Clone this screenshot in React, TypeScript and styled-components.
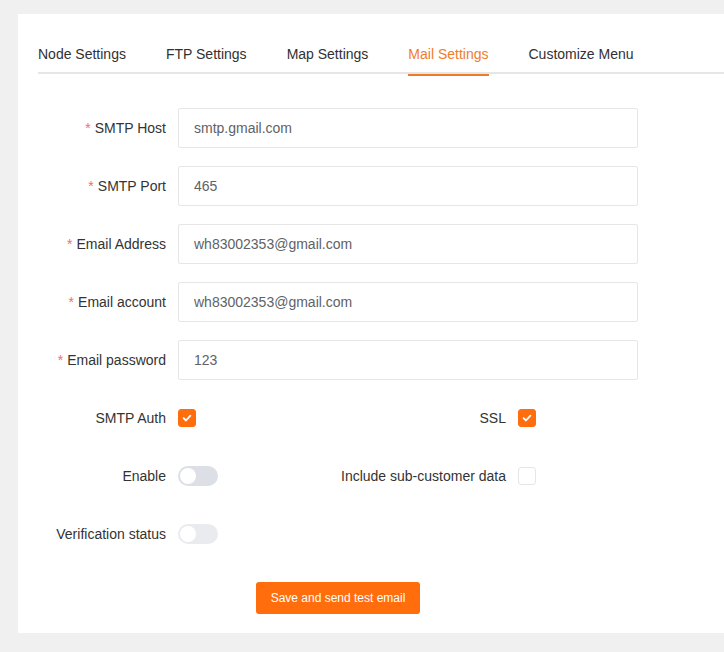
import React from "react";
import styled, { createGlobalStyle } from "styled-components";

const Global = createGlobalStyle`
  html, body { margin: 0; padding: 0; background: #f0f0f0; }
  body { font-family: "Liberation Sans", Arial, sans-serif; }
  * { box-sizing: border-box; }
`;

const Page = styled.div`
  padding: 14px 0 19px 18px;
  width: 724px;
`;

const Card = styled.div`
  background: #fff;
  padding: 19px 0 15px 20px;
`;

const TabBar = styled.div`
  display: flex;
  height: 41px;
  border-bottom: 2px solid #e6e6e6;
  margin-bottom: 34px;
`;

const Tab = styled.div<{ $active?: boolean }>`
  position: relative;
  height: 41px;
  line-height: 43px;
  padding: 0 20px;
  font-size: 14px;
  color: ${(p) => (p.$active ? "#f07c2b" : "#303133")};
  &:first-child { padding-left: 0; }
  ${(p) =>
    p.$active &&
    `&::after {
      content: "";
      position: absolute;
      left: 20px;
      right: 20px;
      bottom: -2px;
      height: 2px;
      background: #f07a26;
    }`}
`;

const Form = styled.div`
  width: 600px;
`;

const Row = styled.div`
  display: grid;
  grid-template-columns: 300px 300px;
  margin-bottom: 18px;
`;

const Item = styled.div`
  display: flex;
  align-items: center;
  height: 40px;
  margin-bottom: 18px;
`;

const HalfItem = styled.div`
  display: flex;
  align-items: center;
  height: 40px;
`;

const Label = styled.label<{ $w?: number }>`
  width: ${(p) => p.$w ?? 140}px;
  flex-shrink: 0;
  padding-right: 12px;
  text-align: right;
  font-size: 14px;
  color: #333;
`;

const Star = styled.span`
  color: #f56c6c;
  margin-right: 4px;
`;

const Input = styled.input`
  width: 460px;
  height: 40px;
  border: 1px solid #e6e6e6;
  border-radius: 2px;
  padding: 0 15px;
  font-family: "Liberation Sans", Arial, sans-serif;
  font-size: 14px;
  color: #606266;
  outline: none;
`;

const Box = styled.span<{ $checked?: boolean }>`
  width: 18px;
  height: 18px;
  border-radius: 3px;
  display: inline-flex;
  align-items: center;
  justify-content: center;
  background: ${(p) => (p.$checked ? "#ff6d0d" : "#fff")};
  border: 1px solid ${(p) => (p.$checked ? "#ff6d0d" : "#e4e6eb")};
`;

const Switch = styled.span<{ $dim?: boolean }>`
  position: relative;
  width: 40px;
  height: 20px;
  border-radius: 10px;
  background: #dcdfe6;
  opacity: ${(p) => (p.$dim ? 0.6 : 1)};
  &::after {
    content: "";
    position: absolute;
    left: 2px;
    top: 2px;
    width: 16px;
    height: 16px;
    border-radius: 50%;
    background: #fff;
  }
`;

const ButtonRow = styled.div`
  display: flex;
  justify-content: center;
  align-items: center;
  height: 40px;
  margin-top: 24px;
`;

const Button = styled.button`
  height: 32px;
  padding: 0 15px;
  border: none;
  border-radius: 3px;
  background: #ff6d0d;
  color: #fff;
  font-family: "Liberation Sans", Arial, sans-serif;
  font-size: 12px;
`;

const Check = () => (
  <svg width="12" height="12" viewBox="0 0 12 12">
    <path d="M2.6 6.2 L5 8.5 L9.4 3.6" fill="none" stroke="#fff" strokeWidth="1.8" strokeLinecap="round" strokeLinejoin="round" />
  </svg>
);

const fields = [
  ["SMTP Host", "smtp.gmail.com"],
  ["SMTP Port", "465"],
  ["Email Address", "wh83002353@gmail.com"],
  ["Email account", "wh83002353@gmail.com"],
  ["Email password", "123"],
];

export default function App() {
  return (
    <Page>
      <Global />
      <Card>
        <TabBar>
          <Tab>Node Settings</Tab>
          <Tab>FTP Settings</Tab>
          <Tab>Map Settings</Tab>
          <Tab $active>Mail Settings</Tab>
          <Tab>Customize Menu</Tab>
        </TabBar>
        <Form>
          {fields.map(([l, v]) => (
            <Item key={l}>
              <Label>
                <Star>*</Star>
                {l}
              </Label>
              <Input defaultValue={v} />
            </Item>
          ))}
          <Row>
            <HalfItem>
              <Label>SMTP Auth</Label>
              <Box $checked>
                <Check />
              </Box>
            </HalfItem>
            <HalfItem>
              <Label $w={180}>SSL</Label>
              <Box $checked>
                <Check />
              </Box>
            </HalfItem>
          </Row>
          <Row>
            <HalfItem>
              <Label>Enable</Label>
              <Switch />
            </HalfItem>
            <HalfItem>
              <Label $w={180}>Include sub-customer data</Label>
              <Box />
            </HalfItem>
          </Row>
          <Item>
            <Label>Verification status</Label>
            <Switch $dim />
          </Item>
          <ButtonRow>
            <Button>Save and send test email</Button>
          </ButtonRow>
        </Form>
      </Card>
    </Page>
  );
}
